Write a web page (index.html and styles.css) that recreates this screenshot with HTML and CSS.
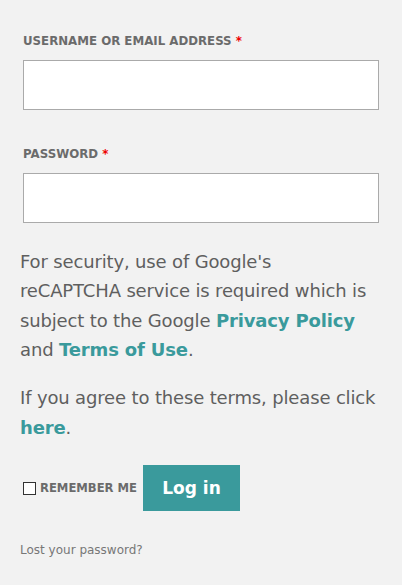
FILE: index.html
```html
<!DOCTYPE html>
<html>
<head>
<meta charset="utf-8">
<link rel="stylesheet" href="styles.css">
</head>
<body>
<form class="login">
  <div class="fields">
    <div class="field">
      <label class="label">Username or Email Address <span class="req">*</span></label>
      <input class="input" type="text">
    </div>
    <div class="field">
      <label class="label">Password <span class="req">*</span></label>
      <input class="input" type="password">
    </div>
  </div>
  <p class="text">For security, use of Google's<br>reCAPTCHA service is required which is subject to the Google <a href="#">Privacy Policy</a> and <a href="#">Terms of Use</a>.</p>
  <p class="text">If you agree to these terms, please click <a href="#">here</a>.</p>
  <div class="actions">
    <label class="remember"><span class="box"></span>Remember me</label>
    <button class="btn" type="button">Log in</button>
  </div>
  <a class="lost" href="#">Lost your password?</a>
</form>
</body>
</html>
```
FILE: styles.css
```css
html, body {
  margin: 0;
  padding: 0;
  background: #f2f2f2;
}
body {
  font-family: "DejaVu Sans", sans-serif;
  color: #666;
}
.login {
  padding: 33px 20px 0 20px;
  width: 362px;
}
.fields {
  display: flex;
  flex-direction: column;
  gap: 36px;
  margin-bottom: 23.5px;
}
.field {
  display: flex;
  flex-direction: column;
  padding-left: 3px;
}
.label {
  font-size: 11.8px;
  font-weight: bold;
  text-transform: uppercase;
  letter-spacing: 0;
  line-height: 16px;
  color: #6b6b6b;
  margin-bottom: 11px;
}
.req {
  color: #e00;
}
.input {
  box-sizing: border-box;
  width: 356px;
  height: 50px;
  border: 1px solid #aaa;
  background: #fff;
  margin: 0;
}
.text {
  font-size: 18px;
  letter-spacing: -0.15px;
  line-height: 29.6px;
  color: #5f5f5f;
  margin: 0 0 18.5px 0;
}
.text a {
  color: #3a9a9c;
  font-weight: bold;
  text-decoration: none;
}
.actions {
  display: flex;
  align-items: center;
  margin-top: 22px;
  padding-left: 3px;
}
.remember {
  display: flex;
  align-items: center;
  font-size: 11.6px;
  font-weight: bold;
  text-transform: uppercase;
  color: #6b6b6b;
  margin-top: 1px;
}
.box {
  width: 11px;
  height: 11px;
  border: 1px solid #333;
  background: #fff;
  margin-right: 4px;
}
.btn {
  margin-left: 6px;
  width: 97px;
  height: 46px;
  border: 0;
  background: #3a9a9c;
  color: #fff;
  font-family: "DejaVu Sans", sans-serif;
  font-weight: bold;
  font-size: 17px;
  padding: 0;
}
.lost {
  display: block;
  margin-top: 32px;
  font-size: 12px;
  color: #777;
  text-decoration: none;
}
```
